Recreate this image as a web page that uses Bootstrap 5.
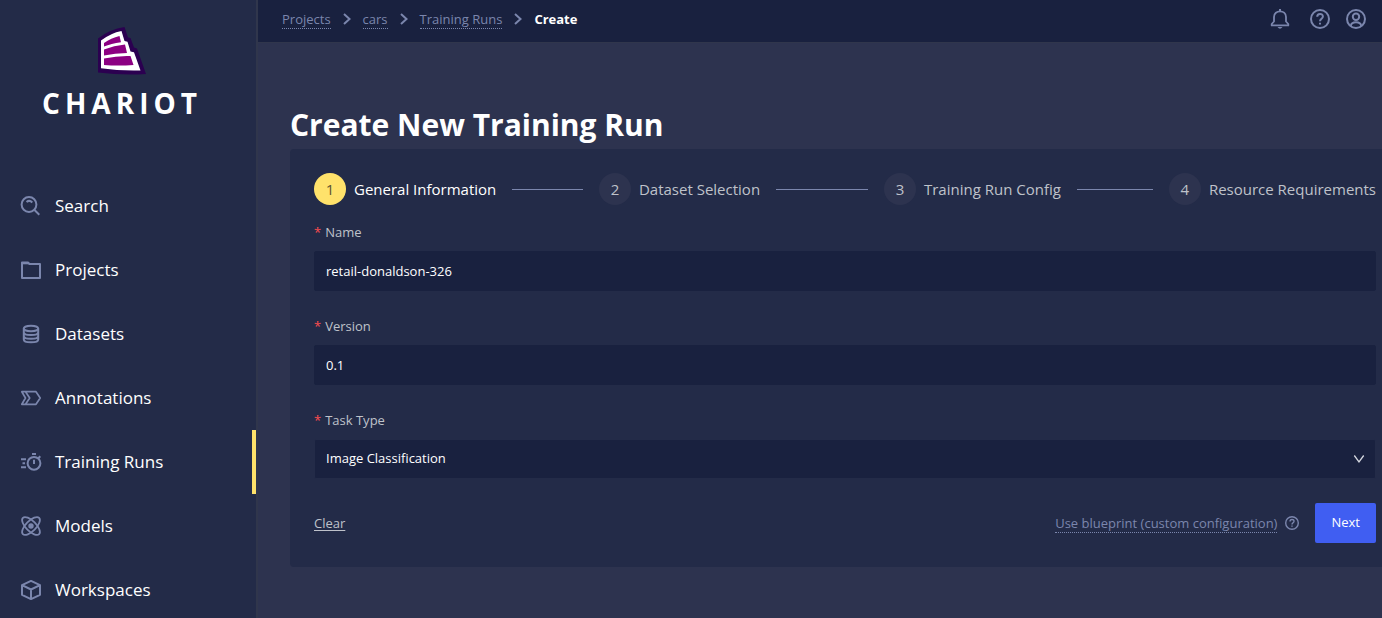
<!DOCTYPE html>
<html lang="en">
<head>
<meta charset="utf-8">
<meta name="viewport" content="width=device-width, initial-scale=1">
<title>Chariot – Create New Training Run</title>
<link href="https://cdn.jsdelivr.net/npm/bootstrap@5.3.0/dist/css/bootstrap.min.css" rel="stylesheet">
<style>
  :root { --panel: #232b48; --deep: #19213f; --page: #2d334f; --rule: #30364c; --muted: #7b86ad; --soft: #bfc2ca; --gold: #ffe26b; }
  body { font-family: "Open Sans", "Noto Sans", sans-serif; font-size: 13px; line-height: 22px; background: var(--page); color: #fff; }
  svg { display: block; flex: none; }
  .ico { fill: none; stroke: currentColor; stroke-width: 2; color: var(--muted); }
  .sidebar { width: 258px; background: var(--panel); border-right: 2px solid var(--rule); overflow-y: auto; scrollbar-width: none; }
  .brand { height: 174px; padding: 26px 12px 0 0; color: #fff; }
  .brand-name { font-size: 28px; font-weight: 700; line-height: 32px; letter-spacing: 5px; margin-top: 11px; }
  .side-link { height: 64px; padding: 0 20px; gap: 13px; font-size: 17px; color: #fff; border-right: 4px solid transparent; flex: none; }
  .side-link:hover { color: #fff; }
  .side-link.active { border-right-color: var(--gold); }
  .topbar { height: 43px; background: var(--deep); border-bottom: 1px solid var(--rule); padding: 0 16px 4px 24px; }
  .dotted { color: var(--muted); text-decoration: none; border-bottom: 1px dotted currentColor; line-height: 18px; }
  .crumbs { gap: 12px; }
  .crumbs .ico { width: 8px; }
  .top-icons { gap: 16px; }
  .top-icons button, .help-btn { background: none; border: 0; padding: 0; }
  .workspace { padding: 62px 0 0 32px; }
  h1 { font-size: 30px; line-height: 40px; font-weight: 700; margin: 0 0 4px; }
  .panel { background: var(--panel); border-radius: 4px 0 0 4px; padding: 24px 6px 24px 24px; }
  .steps { font-size: 15px; color: var(--soft); margin: 0 0 16px; }
  .step { flex: 1 1 0; min-width: 0; white-space: nowrap; }
  .step:last-child { flex: none; }
  .step-num { width: 32px; height: 32px; border-radius: 50%; background: var(--page); margin-right: 8px; flex: none; }
  .step.current { color: #fff; }
  .step.current .step-num { background: var(--gold); color: #5d5333; }
  .step-line { flex: 1; height: 1px; background: var(--muted); margin: 0 16px; }
  .form-label { color: var(--soft); margin-bottom: 8px; display: block; line-height: 22px; }
  .req { color: #ff4d4f; margin-right: 4px; line-height: 1; }
  .field { margin-bottom: 24px; }
  .field .form-control, .field .form-select { height: 40px; background-color: var(--deep); border: 1px solid var(--deep); border-radius: 2px; color: #fff; font-size: 13px; padding: 0 11px; }
  .field .form-select { border-color: var(--panel); padding-right: 36px; background-image: url("data:image/svg+xml,%3csvg xmlns='http://www.w3.org/2000/svg' viewBox='0 0 12 12'%3e%3cpath fill='none' stroke='%23d5d8e0' stroke-width='1.3' d='M1.3 2.5 6 9l4.700-6.500'/%3e%3c/svg%3e"); background-size: 12px 12px; background-position: right 10px center; }
  .clear { color: var(--soft); text-underline-offset: 2px; }
  .btn-next { background: #405ef2; color: #fff; height: 40px; border-radius: 2px; border: 0; padding: 0 16px; font-size: 13px; font-weight: 500; }
</style>
</head>
<body>
<div class="d-flex vh-100 overflow-hidden">
  <aside class="sidebar d-flex flex-column flex-shrink-0">
    <a href="#" class="brand d-flex flex-column align-items-center text-decoration-none flex-shrink-0">
      <svg width="50" height="50" viewBox="0 0 50 50" aria-hidden="true">
        <path fill="#2b0050" d="M1 12.500Q13 3 27.500 1L31 11.500 33.500 12 37 21.500 40 22.500 49 48Q25 49.500 1 46.500Z"/>
        <path fill="#fff" d="M4 14.500Q14 7 24.500 5L27.500 15 30.500 15.800 33.500 25.500 37 26.300 43.500 44.500Q22 45 4 42.300Z"/>
        <path fill="#8c0082" d="M7 17Q14 12 22.500 10L24 16.200Q14 17.500 7 20.500ZM7 23.500Q17 19.500 28 18.500L30 27Q18 27.200 7 29.500ZM7 32.500Q21 29.500 33.500 30L36.500 39Q21 40 7 39Z"/>
      </svg>
      <span class="brand-name">CHARIOT</span>
    </a>
    <nav class="nav flex-column flex-nowrap" aria-label="Main">
      <a href="#" class="side-link d-flex align-items-center text-decoration-none"><svg class="ico" width="22" height="22" viewBox="0 0 22 22"><circle cx="9" cy="9.500" r="7.400"/><path d="M14.500 15 19.300 19.700M6.500 7Q9.500 4.500 12.300 7.500"/></svg>Search</a>
      <a href="#" class="side-link d-flex align-items-center text-decoration-none"><svg class="ico" width="22" height="22" viewBox="0 0 22 22"><path stroke-linejoin="round" d="M2 19V3.500H8L9.500 5H20V19Z"/><path d="M2 4.300H9"/></svg>Projects</a>
      <a href="#" class="side-link d-flex align-items-center text-decoration-none"><svg class="ico" width="22" height="22" viewBox="0 0 22 22"><ellipse cx="11" cy="5.500" rx="7.200" ry="2.800"/><path d="M3.800 5.500V16.500C3.800 20.300 18.200 20.300 18.200 16.500V5.500M3.800 9.200C3.800 13 18.200 13 18.200 9.200M3.800 12.900C3.800 16.700 18.200 16.700 18.200 12.900"/></svg>Datasets</a>
      <a href="#" class="side-link d-flex align-items-center text-decoration-none"><svg class="ico" width="22" height="22" viewBox="0 0 22 22"><path stroke-linejoin="round" stroke-width="1.700" d="M1.800 4.700H16L20.200 11 16 17.300H1.800L5.500 11ZM5.500 4.700 9.700 11 5.500 17.300"/></svg>Annotations</a>
      <a href="#" class="side-link active d-flex align-items-center text-decoration-none" aria-current="page"><svg class="ico" width="22" height="22" viewBox="0 0 22 22"><circle cx="14" cy="12.300" r="6.400"/><path d="M12 3H16M14 8.800V13M18.300 7.200 20.300 5.200M1 8.300H6M2.500 12.300H5M1 16.300H6"/></svg>Training Runs</a>
      <a href="#" class="side-link d-flex align-items-center text-decoration-none"><svg class="ico" width="22" height="22" viewBox="0 0 22 22"><ellipse cx="11" cy="11" rx="11.500" ry="5.100" stroke-width="1.800" transform="rotate(45 11 11)"/><ellipse cx="11" cy="11" rx="11.500" ry="5.100" stroke-width="1.800" transform="rotate(-45 11 11)"/><circle cx="11" cy="11" r="2.700" fill="currentColor" stroke="none"/></svg>Models</a>
      <a href="#" class="side-link d-flex align-items-center text-decoration-none"><svg class="ico" width="22" height="22" viewBox="0 0 22 22"><path stroke-linejoin="round" d="M11 1.900 20 6.200V15.800L11 20.100 2 15.800V6.200ZM2 6.200 11 10.500 20 6.200M11 10.500V20"/></svg>Workspaces</a>
    </nav>
  </aside>

  <div class="d-flex flex-column flex-grow-1 overflow-auto">
    <header class="topbar d-flex align-items-center justify-content-between flex-shrink-0">
      <nav class="crumbs d-flex align-items-center" aria-label="Breadcrumb">
        <a href="#" class="dotted">Projects</a>
        <svg class="ico" width="8" height="12" viewBox="0 0 8 12"><path d="M1 1 6.500 6 1 11"/></svg>
        <a href="#" class="dotted">cars</a>
        <svg class="ico" width="8" height="12" viewBox="0 0 8 12"><path d="M1 1 6.500 6 1 11"/></svg>
        <a href="#" class="dotted">Training Runs</a>
        <svg class="ico" width="8" height="12" viewBox="0 0 8 12"><path d="M1 1 6.500 6 1 11"/></svg>
        <span class="fw-bold" aria-current="page">Create</span>
      </nav>
      <div class="top-icons d-flex align-items-center">
        <button type="button" aria-label="Notifications" class="me-1"><svg class="ico" width="20" height="20" viewBox="0 0 20 20"><path stroke-linejoin="round" stroke-width="1.800" d="M1.700 16.400V15L4 12.500V8C4 .4 16 .4 16 8V12.500L18.300 15V16.400Z"/><path d="M10 0V2.500"/><path d="M7.500 18H12.500Q10 21.500 7.500 18Z" fill="currentColor" stroke="none"/></svg></button>
        <button type="button" aria-label="Help"><svg class="ico" width="20" height="20" viewBox="0 0 20 20"><circle cx="10" cy="10" r="9"/><path d="M7.200 7.700C7.200 4 12.900 4 12.900 7.500 12.900 9.700 10 9.700 10 12.200M10 13.700V15.500"/></svg></button>
        <button type="button" aria-label="Account"><svg class="ico" width="20" height="20" viewBox="0 0 20 20"><circle cx="10" cy="10" r="9"/><circle cx="10" cy="7.700" r="3.200"/><path d="M4.800 17C5.300 12 14.700 12 15.200 17"/></svg></button>
      </div>
    </header>

    <main class="workspace">
      <h1>Create New Training Run</h1>
      <form class="panel">
        <ol class="steps d-flex list-unstyled">
          <li class="step current d-flex align-items-center" aria-current="step"><span class="step-num d-flex align-items-center justify-content-center">1</span>General Information<span class="step-line"></span></li>
          <li class="step d-flex align-items-center"><span class="step-num d-flex align-items-center justify-content-center">2</span>Dataset Selection<span class="step-line"></span></li>
          <li class="step d-flex align-items-center"><span class="step-num d-flex align-items-center justify-content-center">3</span>Training Run Config<span class="step-line"></span></li>
          <li class="step d-flex align-items-center"><span class="step-num d-flex align-items-center justify-content-center">4</span>Resource Requirements</li>
        </ol>
        <div class="field">
          <label class="form-label" for="run-name"><span class="req">*</span>Name</label>
          <input class="form-control" id="run-name" type="text" value="retail-donaldson-326" required>
        </div>
        <div class="field">
          <label class="form-label" for="run-version"><span class="req">*</span>Version</label>
          <input class="form-control" id="run-version" type="text" value="0.1" required>
        </div>
        <div class="field">
          <label class="form-label" for="task-type"><span class="req">*</span>Task Type</label>
          <select class="form-select" id="task-type" required><option>Image Classification</option></select>
        </div>
        <div class="d-flex align-items-center justify-content-between">
          <a href="#" class="clear">Clear</a>
          <div class="d-flex align-items-center">
            <a href="#" class="dotted me-2">Use blueprint (custom configuration)</a>
            <button type="button" class="help-btn me-3" aria-label="About blueprints"><svg class="ico" width="14" height="14" viewBox="0 0 20 20"><circle cx="10" cy="10" r="9"/><path d="M7.200 7.700C7.200 4 12.900 4 12.900 7.500 12.900 9.700 10 9.700 10 12.200M10 13.700V15.500"/></svg></button>
            <button type="submit" class="btn btn-next">Next</button>
          </div>
        </div>
      </form>
    </main>
  </div>
</div>
<script src="https://cdn.jsdelivr.net/npm/bootstrap@5.3.0/dist/js/bootstrap.bundle.min.js"></script>
</body>
</html>
